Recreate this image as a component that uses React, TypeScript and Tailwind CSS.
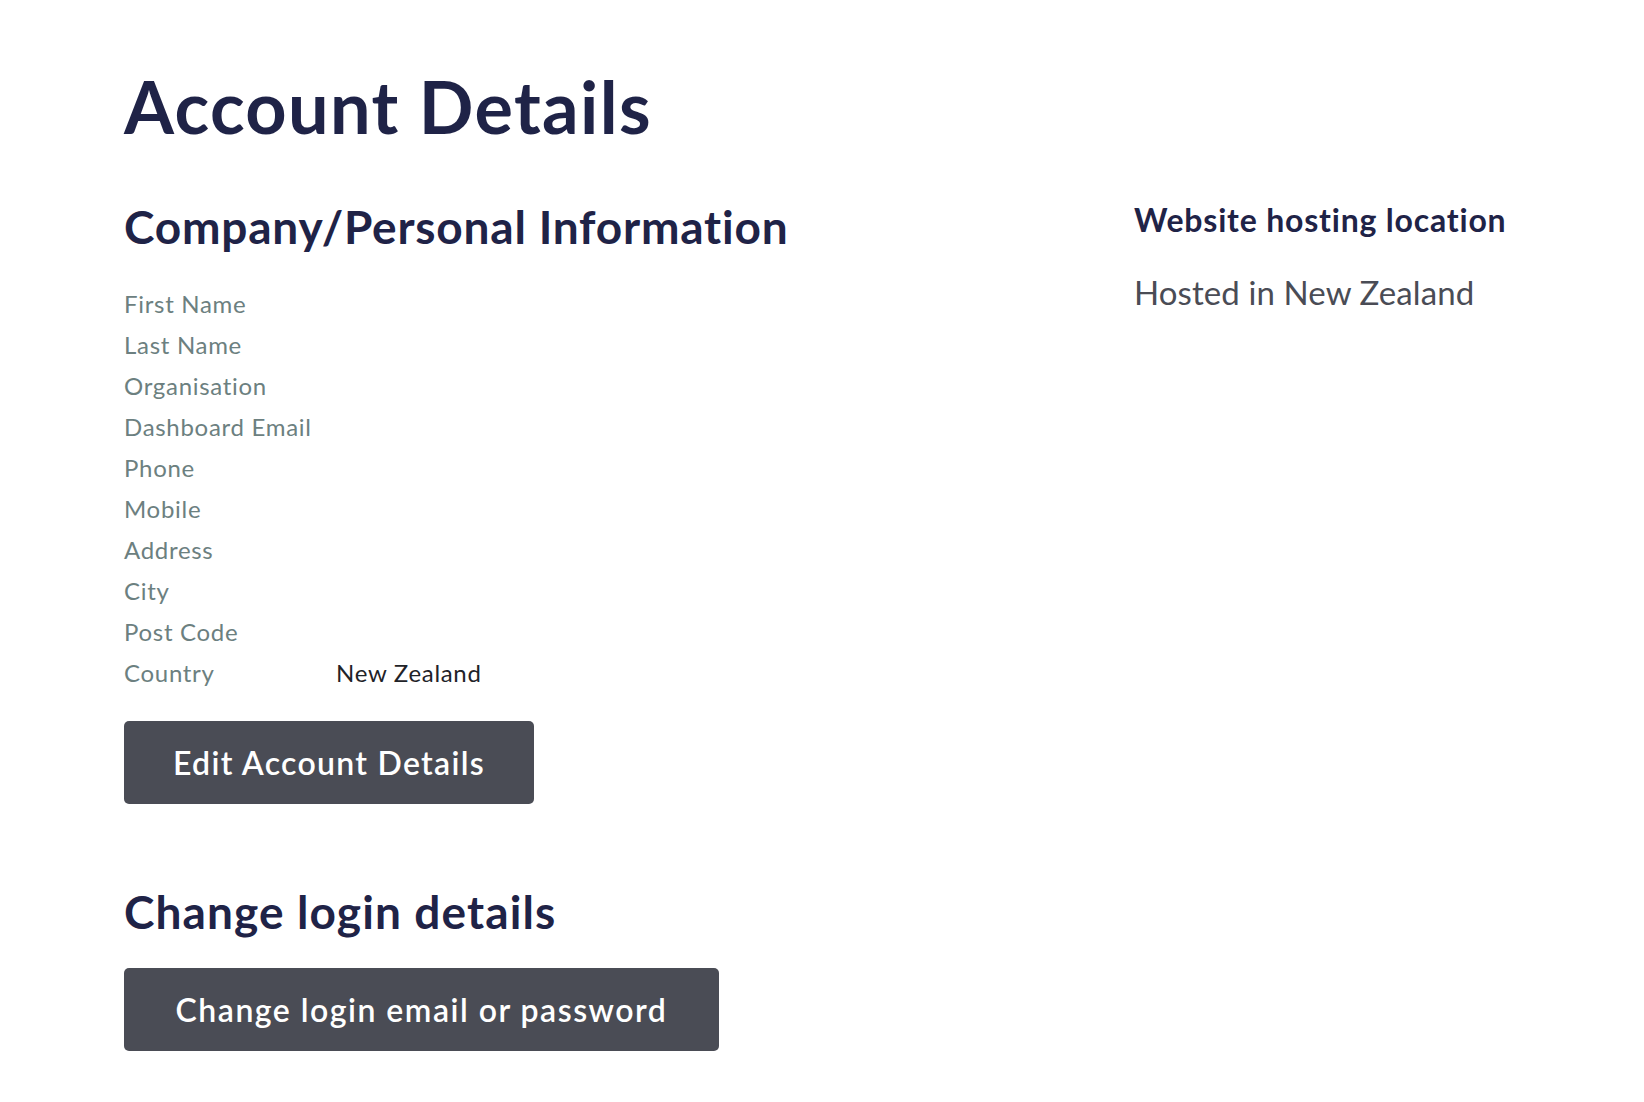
import React from 'react'

const fields = [
  { label: 'First Name', value: '' },
  { label: 'Last Name', value: '' },
  { label: 'Organisation', value: '' },
  { label: 'Dashboard Email', value: '' },
  { label: 'Phone', value: '' },
  { label: 'Mobile', value: '' },
  { label: 'Address', value: '' },
  { label: 'City', value: '' },
  { label: 'Post Code', value: '' },
  { label: 'Country', value: 'New Zealand' },
]

export default function App() {
  return (
    <div className="min-h-screen bg-white font-['Lato',sans-serif] pl-[124px] pt-[70px]">
      <h1 className="text-[72px] font-bold leading-none text-[#1f2347] tracking-[1.4px]">
        Account Details
      </h1>

      <div className="grid grid-cols-[1010px_1fr] mt-[62px]">
        <div>
          <h2 className="text-[46px] font-bold leading-none text-[#1f2347] tracking-[0.8px]">
            Company/Personal Information
          </h2>

          <dl className="mt-[33px] flex flex-col">
            {fields.map((f) => (
              <div key={f.label} className="flex h-[41px] items-center text-[24px] tracking-[0.7px]">
                <dt className="w-[212px] text-[#6c8080]">{f.label}</dt>
                <dd className="text-[#1f2328]">{f.value}</dd>
              </div>
            ))}
          </dl>

          <button className="mt-[28px] h-[83px] w-[410px] rounded-[5px] bg-[#4a4c55] text-[32px] font-semibold text-white tracking-[1.3px]">
            Edit Account Details
          </button>

          <h2 className="mt-[85px] text-[46px] font-bold leading-none text-[#1f2347] tracking-[1.1px]">
            Change login details
          </h2>

          <button className="mt-[33px] h-[83px] w-[595px] rounded-[5px] bg-[#4a4c55] text-[32px] font-semibold text-white tracking-[1.5px]">
            Change login email or password
          </button>
        </div>

        <div>
          <h3 className="text-[32px] font-bold leading-none text-[#1f2347] tracking-[0.8px]">
            Website hosting location
          </h3>
          <p className="mt-[40px] text-[33px] leading-none text-[#4a4c55] tracking-[0.1px]">
            Hosted in New Zealand
          </p>
        </div>
      </div>
    </div>
  )
}
